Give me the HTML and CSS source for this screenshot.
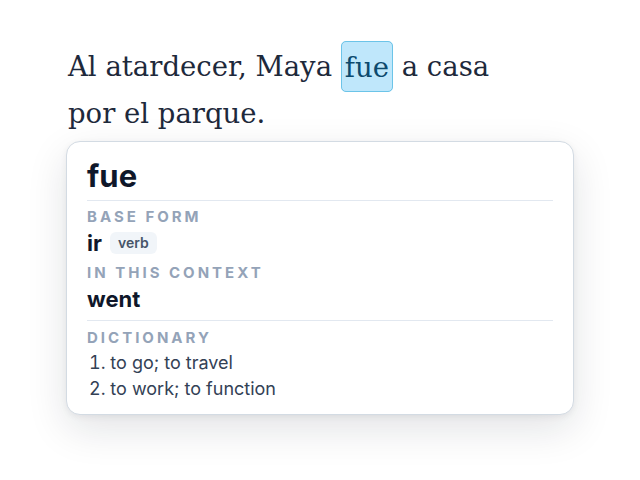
FILE: index.html
```html
<!DOCTYPE html>
<html lang="es">
<head>
<meta charset="utf-8">
<link rel="stylesheet" href="styles.css">
</head>
<body>
<main class="wrap">
  <p class="sentence">Al atardecer, Maya <span class="hl">fue</span> a casa por el parque.</p>
  <section class="card">
    <h1 class="word">fue</h1>
    <div class="sec first">
      <div class="label">Base form</div>
      <div class="value">ir <span class="badge">verb</span></div>
      <div class="label">In this context</div>
      <div class="value">went</div>
    </div>
    <div class="sec last">
      <div class="label">Dictionary</div>
      <ol class="defs">
        <li>to go; to travel</li>
        <li>to work; to function</li>
      </ol>
    </div>
  </section>
</main>
</body>
</html>
```
FILE: styles.css
```css
html, body { margin: 0; padding: 0; background: #ffffff; }
body { font-family: Inter, "Noto Sans", sans-serif; color: #0f172a; min-height: 480px; }
.wrap { width: 508px; margin: 0 auto; padding: 43px 0 60px; }
.sentence {
  margin: 0 0 4px;
  width: 445px;
  padding-left: 2px;
  font-family: "DejaVu Serif", "Liberation Serif", serif;
  font-size: 27.5px;
  line-height: 47px;
  color: #1e293b;
}
.hl {
  padding: 8.5px 3px 8.5px;
  background: #bfe7fb;
  border: 1px solid #6cc4e8;
  border-radius: 5px;
  color: #0c4a6e;
}
.card {
  box-sizing: border-box;
  width: 508px;
  border: 1px solid #d3dbe3;
  border-radius: 14px;
  background: #fff;
  padding: 15px 20px 12px;
  box-shadow: 0 14px 40px rgba(15, 23, 42, 0.12), 0 2px 6px rgba(15, 23, 42, 0.06);
}
.word {
  margin: 0;
  font-size: 31px;
  line-height: 38px;
  font-weight: 700;
  color: #0f172a;
  padding-bottom: 5px;
  border-bottom: 1px solid #e2e8f0;
}
.sec { padding: 6px 0 7px; border-bottom: 1px solid #e2e8f0; }
.sec.last { border-bottom: 0; padding: 7px 0 0; }
.label {
  font-size: 15px;
  line-height: 20px;
  font-weight: 700;
  letter-spacing: 0.2em;
  text-transform: uppercase;
  color: #94a3b8;
  margin-bottom: 2px;
}
.value {
  font-size: 22px;
  line-height: 28px;
  font-weight: 700;
  color: #0f172a;
  display: flex;
  align-items: center;
  gap: 8px;
  margin-bottom: 6px;
}
.value:last-child { margin-bottom: 0; }
.badge {
  font-size: 14px;
  line-height: 16px;
  font-weight: 600;
  color: #475569;
  background: #f1f5f9;
  border-radius: 6px;
  padding: 3px 8px;
}
.defs {
  margin: 0;
  padding: 0 0 0 2px;
  list-style-position: inside;
  font-size: 18px;
  line-height: 26px;
  color: #334155;
}
```
